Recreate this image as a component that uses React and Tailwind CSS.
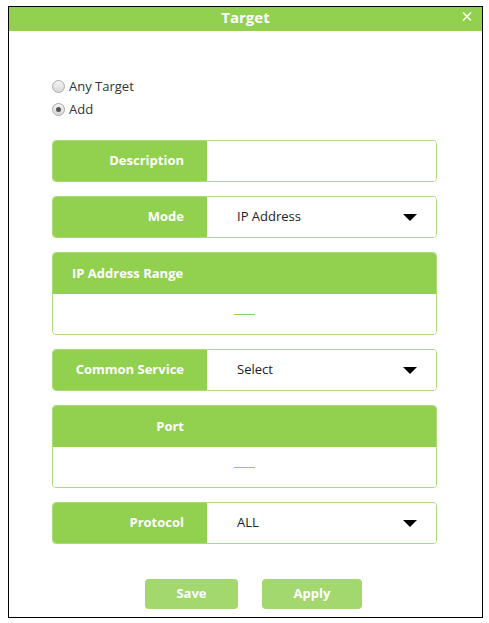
import React from "react";

const font = { fontFamily: '"Open Sans", "Noto Sans", sans-serif' };

function Radio({ checked, label }) {
  return (
    <div className="flex items-center h-[23px]">
      <div className="w-[13px] h-[13px] rounded-full border border-[#a9a9a9] bg-gradient-to-b from-[#f4f4f4] to-[#d8d8d8] flex items-center justify-center">
        {checked && <div className="w-[5px] h-[5px] rounded-full bg-[#555]" />}
      </div>
      <span className="ml-[4px] text-[13px] text-[#333]">{label}</span>
    </div>
  );
}

function Arrow() {
  return (
    <svg width="14" height="7" viewBox="0 0 14 7" className="mr-[19px]">
      <polygon points="0,0 14,0 7,7" fill="#000" />
    </svg>
  );
}

function Row({ label, value, arrow }) {
  return (
    <div className="flex h-[42px] rounded-[4px] border border-[#a9dc79] overflow-hidden">
      <div className="w-[154px] bg-[#92d050] flex items-center justify-end pr-[23px] text-white font-bold text-[13px]">
        {label}
      </div>
      <div className="flex-1 bg-white flex items-center justify-between pl-[30px]">
        <span className="text-[13px] text-[#222]">{value}</span>
        {arrow && <Arrow />}
      </div>
    </div>
  );
}

function Dash() {
  return <div className="w-[21px] h-[1px] bg-[#8fcf55]" />;
}

function Block({ label }) {
  return (
    <div className="flex flex-col h-[83px] rounded-[4px] border border-[#a9dc79] overflow-hidden">
      <div className="h-[41px] bg-[#92d050] flex items-center pl-[19px] text-white font-bold text-[13px]">
        {label}
      </div>
      <div className="flex-1 bg-white flex items-center justify-center">
        <Dash />
      </div>
    </div>
  );
}

function PortBlock() {
  return (
    <div className="flex flex-col h-[83px] rounded-[4px] border border-[#a9dc79] overflow-hidden">
      <div className="h-[41px] bg-[#92d050] flex items-center">
        <div className="w-[154px] flex justify-end pr-[23px] text-white font-bold text-[13px]">Port</div>
      </div>
      <div className="flex-1 bg-white flex items-center justify-center">
        <Dash />
      </div>
    </div>
  );
}

export default function App() {
  return (
    <div className="bg-white w-[489px] h-[623px] pt-[6px] pl-[8px]" style={font}>
      <div className="w-[475px] h-[612px] border border-black flex flex-col">
        <div className="h-[24px] bg-[#92d050] flex items-start justify-center relative">
          <span className="text-white font-bold text-[15px] leading-[20px]">Target</span>
          <svg
            width="10"
            height="9"
            viewBox="0 0 10 9"
            className="absolute right-[10px] top-[5px]"
          >
            <path d="M1 0.5 L9 8.5 M9 0.5 L1 8.5" stroke="#fff" strokeWidth="1.4" fill="none" />
          </svg>
        </div>
        <div className="pl-[43px] pr-[45px] pt-[44px] flex flex-col">
          <Radio label="Any Target" />
          <Radio label="Add" checked />
          <div className="mt-[19px] flex flex-col gap-[14px]">
            <Row label="Description" value="" />
            <Row label="Mode" value="IP Address" arrow />
            <Block label="IP Address Range" />
            <Row label="Common Service" value="Select" arrow />
            <PortBlock />
            <Row label="Protocol" value="ALL" arrow />
          </div>
          <div className="flex mt-[35px] pl-[93px] gap-[24px]">
            <button className="w-[93px] h-[30px] rounded-[4px] bg-[#a2d86e] text-white font-bold text-[13px]">Save</button>
            <button className="w-[100px] h-[30px] rounded-[4px] bg-[#a2d86e] text-white font-bold text-[13px]">Apply</button>
          </div>
        </div>
      </div>
    </div>
  );
}
